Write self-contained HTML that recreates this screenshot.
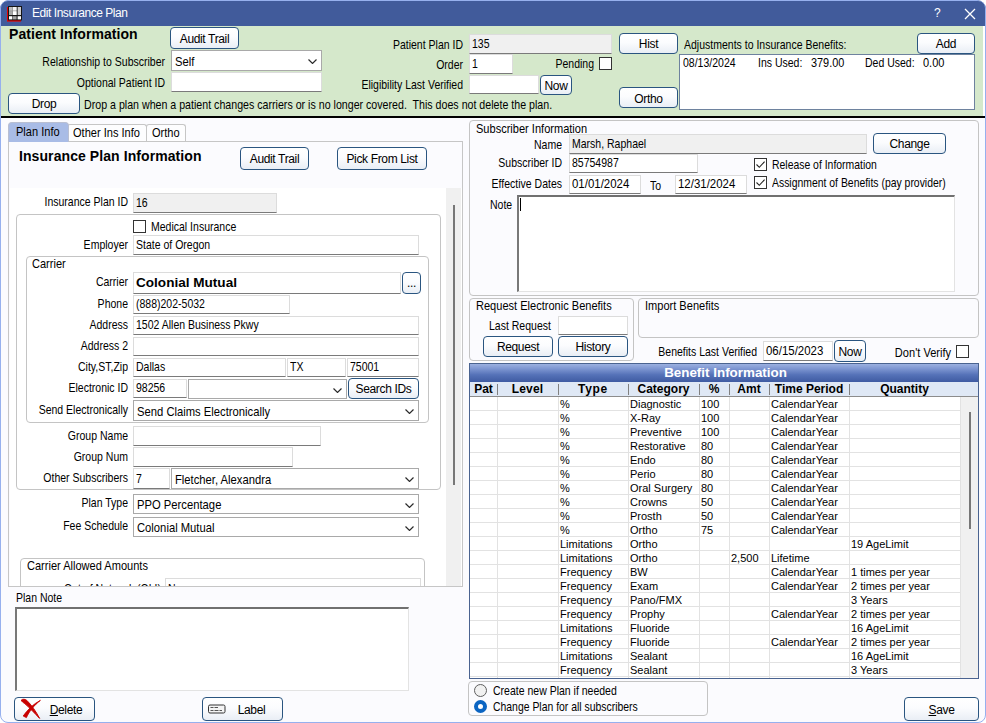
<!DOCTYPE html>
<html>
<head>
<meta charset="utf-8">
<title>Edit Insurance Plan</title>
<style>
*{box-sizing:border-box;margin:0;padding:0}
html,body{width:986px;height:723px;overflow:hidden;background:#fff}
body{font-family:"Liberation Sans",sans-serif;font-size:11px;color:#000;position:relative}
#win{position:absolute;left:0;top:0;width:986px;height:723px;background:#fff;border-top-left-radius:9px;border-top-right-radius:9px;overflow:hidden}
.a{position:absolute;white-space:pre}
.l{position:absolute;white-space:pre;text-align:right;height:16px;line-height:16px;transform:scale(.955,1.08);transform-origin:100% 74%}
.t{position:absolute;white-space:pre;height:16px;line-height:16px;transform:scale(.955,1.08);transform-origin:0 74%}
.x{display:inline-block;line-height:1;transform:scale(.955,1.08);transform-origin:0 85%}
.s .x{font-size:12px;transform:scale(.937,1.05)}
.x.d{transform:scale(1.04,1.08)}
.i{position:absolute;background:#fff;border:1px solid #dcdcdc;border-bottom-color:#7a7a7a;white-space:pre;padding-left:2px;line-height:16px;overflow:hidden}
.g{background:#f0f0f0}
.s{position:absolute;background:#fff;border:1px solid #a9a9a9;white-space:pre;padding-left:3px;line-height:23px;overflow:hidden}
.s svg{position:absolute;right:4px;top:8px}
.b{position:absolute;border:1px solid #2a5580;border-radius:4px;background:linear-gradient(#ffffff 0%,#fbfcfe 45%,#e9eef5 100%);text-align:center;white-space:pre;font-size:12px;letter-spacing:-0.35px;padding-top:1px}
.c{position:absolute;width:13px;height:13px;border:1px solid #333;background:#fff}
.gt{transform:scale(1.004,1.08)}
.gb{position:absolute;border:1px solid #c4c4c4;border-radius:4px}
.gh{height:15px;line-height:15px;text-align:center;font-weight:bold;font-size:12px;letter-spacing:0}
.gr{left:0;width:491px;height:14px;border-bottom:1px solid #e2e2e2}
.gr span{position:absolute;top:0;line-height:14px;white-space:pre;font-size:11px}
</style>
</head>
<body>
<div id="win">
<!-- title bar -->
<div class="a" id="tb" style="left:0;top:0;width:986px;height:26px;background:#415b9b"></div>
<div class="a" style="left:32px;top:5px;color:#fff;font-size:12px;letter-spacing:-0.45px;line-height:16px">Edit Insurance Plan</div>
<div class="a" style="left:934px;top:6px;color:#fff;font-size:12px;line-height:15px">?</div>
<svg class="a" style="left:964px;top:8px" width="12" height="12" viewBox="0 0 12 12"><path d="M1 1L11 11M11 1L1 11" stroke="#fff" stroke-width="1.3" fill="none"/></svg>
<!-- app icon -->
<svg class="a" style="left:7px;top:6px" width="15" height="16" viewBox="0 0 15 16"><rect x="0" y="1" width="14" height="14.6" fill="#e60000"/><rect x="1" y="0" width="14" height="14.4" fill="#151515"/><rect x="2" y="1" width="7.6" height="8" fill="#8a8a8a"/><rect x="2" y="1" width="3.4" height="3.6" fill="#bdbdbd"/><rect x="6" y="1" width="3.6" height="3.6" fill="#f4f4f4"/><rect x="10.6" y="1" width="3.4" height="8" fill="#cfcfcf"/><rect x="2" y="5.2" width="3.4" height="3.8" fill="#a9a9a9"/><rect x="6" y="5.2" width="3.6" height="3.8" fill="#fff"/><rect x="2" y="10.2" width="3.4" height="3.2" fill="#fff"/><rect x="6" y="10.2" width="3.6" height="3.2" fill="#a2a2a2"/><rect x="10.6" y="10.2" width="3.4" height="3.2" fill="#fff"/></svg>

<!-- green patient panel -->
<div class="a" id="green" style="left:0;top:26px;width:983px;height:90px;background:#d5e8cb"></div>
<div class="a" style="left:0;top:116px;width:986px;height:2px;background:#000"></div>
<div class="a" style="left:9px;top:26px;font-weight:bold;font-size:14px;letter-spacing:0.06px;line-height:17px">Patient Information</div>
<div class="b" style="left:170px;top:27px;width:69px;height:22px;line-height:20px">Audit Trail</div>
<div class="l" style="left:0;width:165px;top:54px">Relationship to Subscriber</div>
<div class="s" style="left:171px;top:50px;width:151px;height:21px"><span class="x">Self</span><svg width="9" height="5" viewBox="0 0 9 5"><path d="M0.5 0.5L4.5 4.5L8.5 0.5" stroke="#2a2a2a" stroke-width="1.15" fill="none"/></svg></div>
<div class="l" style="left:0;width:165px;top:75px">Optional Patient ID</div>
<div class="i" style="left:171px;top:72px;width:151px;height:20px;line-height:18px"></div>
<div class="b" style="left:8px;top:93px;width:72px;height:21px;line-height:19px">Drop</div>
<div class="t" style="left:84px;top:97px;transform:scale(.967,1.08)">Drop a plan when a patient changes carriers or is no longer covered.  This does not delete the plan.</div>

<div class="l" style="left:300px;width:163px;top:37px">Patient Plan ID</div>
<div class="i g" style="left:469px;top:34px;width:143px;height:20px;line-height:18px"><span class="x">135</span></div>
<div class="l" style="left:300px;width:163px;top:57px">Order</div>
<div class="i" style="left:469px;top:54px;width:44px;height:20px;line-height:18px"><span class="x">1</span></div>
<div class="l" style="left:500px;width:94px;top:56px">Pending</div>
<div class="c" style="left:599px;top:57px"></div>
<div class="l" style="left:300px;width:163px;top:77px">Eligibility Last Verified</div>
<div class="i" style="left:469px;top:75px;width:70px;height:19px"></div>
<div class="b" style="left:540px;top:75px;width:32px;height:20px;line-height:18px">Now</div>
<div class="b" style="left:619px;top:33px;width:59px;height:21px;line-height:19px">Hist</div>
<div class="b" style="left:619px;top:87px;width:59px;height:21px;line-height:20px">Ortho</div>
<div class="t" style="left:684px;top:37px">Adjustments to Insurance Benefits:</div>
<div class="b" style="left:917px;top:33px;width:58px;height:21px;line-height:19px">Add</div>
<div class="a" style="left:679px;top:54px;width:296px;height:56px;background:#fff;border:1px solid #6e829e"></div>
<div class="t" style="left:683px;top:55px">08/13/2024</div>
<div class="t" style="left:758px;top:55px">Ins Used:</div>
<div class="t" style="left:811px;top:55px;transform:scale(.99,1.08)">379.00</div>
<div class="t" style="left:865px;top:55px">Ded Used:</div>
<div class="t" style="left:923px;top:55px;transform:scale(1,1.08)">0.00</div>

<!-- SECTION:LEFT -->
<!-- main bg -->
<div class="a" style="left:0;top:118px;width:986px;height:605px;background:#fbfbfe"></div>
<!-- tabs -->
<div class="a" style="left:67px;top:124px;width:80px;height:18px;border:1px solid #c6c6c6;border-bottom:none;border-radius:3px 3px 0 0;background:#fdfdfe"></div>
<div class="a" style="left:146px;top:124px;width:40px;height:18px;border:1px solid #c6c6c6;border-bottom:none;border-radius:3px 3px 0 0;background:#fdfdfe"></div>
<div class="a" style="left:8px;top:141px;width:455px;height:446px;border:1px solid #c6c6c6;background:#fbfbfe"></div>
<div class="a" style="left:8px;top:122px;width:61px;height:20px;border-radius:4px 4px 0 0;background:#a9bce6;border:1px solid #b9bfd2;border-bottom:none"></div>
<div class="t gt" style="left:16px;top:124px">Plan Info</div>
<div class="t gt" style="left:73px;top:125px">Other Ins Info</div>
<div class="t gt" style="left:152px;top:125px">Ortho</div>
<div class="a" style="left:19px;top:148px;font-weight:bold;font-size:14px;letter-spacing:0.08px;line-height:17px">Insurance Plan Information</div>
<div class="b" style="left:240px;top:147px;width:69px;height:23px;line-height:21px">Audit Trail</div>
<div class="b" style="left:337px;top:147px;width:90px;height:23px;line-height:21px">Pick From List</div>
<!-- scroll panel -->
<div class="a" id="sp" style="left:10px;top:188px;width:452px;height:398px;background:#fff;overflow:hidden">
 <div class="a" style="left:436px;top:0;width:15px;height:400px;background:#f0f0f0"></div>
 <div class="a" style="left:443px;top:17px;width:2px;height:280px;background:#777"></div>
 <div class="l" style="left:0;width:118px;top:6px">Insurance Plan ID</div>
 <div class="i g" style="left:123px;top:5px;width:144px;height:20px;line-height:18px"><span class="x">16</span></div>
 <div class="gb" style="left:6px;top:26px;width:425px;height:276px"></div>
 <div class="c" style="left:123px;top:32px"></div>
 <div class="t" style="left:141px;top:31px">Medical Insurance</div>
 <div class="l" style="left:0;width:118px;top:49px">Employer</div>
 <div class="i" style="left:123px;top:47px;width:286px;height:20px;line-height:18px"><span class="x">State of Oregon</span></div>
 <div class="gb" style="left:16px;top:68px;width:403px;height:167px"></div>
 <div class="t gt" style="left:22px;top:68px">Carrier</div>
 <div class="l" style="left:0;width:118px;top:86px">Carrier</div>
 <div class="i cm" style="left:123px;top:84px;width:268px;height:22px;font-weight:bold;font-size:12.5px;line-height:21px"><span style="display:inline-block;transform:scale(1.085,1);transform-origin:0 50%">Colonial Mutual</span></div>
 <div class="b" style="left:392px;top:84px;width:19px;height:22px;line-height:19px">...</div>
 <div class="l" style="left:0;width:118px;top:108px">Phone</div>
 <div class="i" style="left:123px;top:107px;width:157px;height:19px"><span class="x">(888)202-5032</span></div>
 <div class="l" style="left:0;width:118px;top:129px">Address</div>
 <div class="i" style="left:123px;top:128px;width:286px;height:19px"><span class="x">1502 Allen Business Pkwy</span></div>
 <div class="l" style="left:0;width:118px;top:150px">Address 2</div>
 <div class="i" style="left:123px;top:149px;width:286px;height:19px"></div>
 <div class="l" style="left:0;width:118px;top:171px">City,ST,Zip</div>
 <div class="i" style="left:123px;top:170px;width:153px;height:19px"><span class="x">Dallas</span></div>
 <div class="i" style="left:277px;top:170px;width:59px;height:19px"><span class="x">TX</span></div>
 <div class="i" style="left:337px;top:170px;width:72px;height:19px"><span class="x">75001</span></div>
 <div class="l" style="left:0;width:118px;top:192px">Electronic ID</div>
 <div class="i" style="left:123px;top:191px;width:54px;height:19px"><span class="x">98256</span></div>
 <div class="s" style="left:178px;top:191px;width:159px;height:20px"><svg width="9" height="5" viewBox="0 0 9 5"><path d="M0.5 0.5L4.5 4.5L8.5 0.5" stroke="#2a2a2a" stroke-width="1.15" fill="none"/></svg></div>
 <div class="b" style="left:338px;top:190px;width:71px;height:21px;line-height:19px">Search IDs</div>
 <div class="l" style="left:0;width:118px;top:214px">Send Electronically</div>
 <div class="s" style="left:123px;top:212px;width:286px;height:21px"><span class="x">Send Claims Electronically</span><svg width="9" height="5" viewBox="0 0 9 5"><path d="M0.5 0.5L4.5 4.5L8.5 0.5" stroke="#2a2a2a" stroke-width="1.15" fill="none"/></svg></div>
 <div class="l" style="left:0;width:118px;top:240px">Group Name</div>
 <div class="i" style="left:123px;top:238px;width:188px;height:20px;line-height:18px"></div>
 <div class="l" style="left:0;width:118px;top:261px">Group Num</div>
 <div class="i" style="left:123px;top:259px;width:160px;height:20px;line-height:18px"></div>
 <div class="l" style="left:0;width:118px;top:282px">Other Subscribers</div>
 <div class="i" style="left:123px;top:280px;width:37px;height:21px;line-height:20px"><span class="x">7</span></div>
 <div class="s" style="left:161px;top:280px;width:248px;height:21px"><span class="x">Fletcher, Alexandra</span><svg width="9" height="5" viewBox="0 0 9 5"><path d="M0.5 0.5L4.5 4.5L8.5 0.5" stroke="#2a2a2a" stroke-width="1.15" fill="none"/></svg></div>
 <div class="l" style="left:0;width:118px;top:307px">Plan Type</div>
 <div class="s" style="left:123px;top:306px;width:286px;height:20px;line-height:21px"><span class="x">PPO Percentage</span><svg width="9" height="5" viewBox="0 0 9 5"><path d="M0.5 0.5L4.5 4.5L8.5 0.5" stroke="#2a2a2a" stroke-width="1.15" fill="none"/></svg></div>
 <div class="l" style="left:0;width:118px;top:330px">Fee Schedule</div>
 <div class="s" style="left:123px;top:329px;width:286px;height:20px;line-height:21px"><span class="x">Colonial Mutual</span><svg width="9" height="5" viewBox="0 0 9 5"><path d="M0.5 0.5L4.5 4.5L8.5 0.5" stroke="#2a2a2a" stroke-width="1.15" fill="none"/></svg></div>
 <div class="gb" style="left:10px;top:370px;width:405px;height:60px"></div>
 <div class="t gt" style="left:17px;top:370px">Carrier Allowed Amounts</div>
 <div class="l" style="left:0;width:151px;top:393px">Out of Network (OLI)</div>
 <div class="i" style="left:155px;top:390px;width:256px;height:20px;line-height:21px"><span class="x">None</span></div>
</div>
<!-- plan note -->
<div class="t" style="left:16px;top:590px">Plan Note</div>
<div class="a" style="left:15px;top:607px;width:394px;height:84px;background:#fff;border:1px solid #e3e3e3;border-top:2px solid #707070;border-left:2px solid #787878"></div>
<div class="b" style="left:14px;top:697px;width:81px;height:24px;line-height:22px;padding-left:23px"><u>D</u>elete</div>
<svg class="a" style="left:20px;top:698px" width="22" height="22" viewBox="0 0 22 22"><path d="M1.4 2C2.6 0.9 5.2 1 6.8 2.4C11.5 7 16 13.5 19.6 20.4C14.5 15 9 9.2 4.8 5.6C3.4 4.6 1.6 3.8 1.4 2Z" fill="#c80000" stroke="#c80000" stroke-width="1" stroke-linejoin="round"/><path d="M20.4 2.4C14.5 6.8 9 13.5 6.4 19.6L3.2 18C7.4 12 13.5 5.8 20.4 2.4Z" fill="#c80000" stroke="#c80000" stroke-width="0.9" stroke-linejoin="round"/></svg>
<div class="b" style="left:202px;top:697px;width:81px;height:24px;line-height:22px;padding-left:18px">Label</div>
<svg class="a" style="left:208px;top:704px" width="18" height="10" viewBox="0 0 18 10"><rect x="0.5" y="1" width="16.5" height="8" rx="1.5" fill="#f4f4f4" stroke="#333"/><path d="M2.5 3.5h3M6.5 3.5h3.5M2.5 6.5h3M6.5 6.5h4M11.5 6.5h2.5" stroke="#555" stroke-width="1"/></svg>
<!-- END:LEFT -->
<!-- SECTION:RIGHT -->
<div class="gb" style="left:469px;top:120px;width:510px;height:176px"></div>
<div class="t gt" style="left:476px;top:121px">Subscriber Information</div>
<div class="l" style="left:470px;width:92px;top:137px">Name</div>
<div class="i g" style="left:569px;top:134px;width:298px;height:20px;line-height:18px"><span class="x">Marsh, Raphael</span></div>
<div class="b" style="left:873px;top:133px;width:73px;height:21px;line-height:19px">Change</div>
<div class="l" style="left:470px;width:92px;top:155px">Subscriber ID</div>
<div class="i" style="left:569px;top:154px;width:129px;height:19px"><span class="x">85754987</span></div>
<div class="c" style="left:754px;top:158px"><svg width="11" height="11" viewBox="0 0 11 11" style="position:absolute;left:0;top:0"><path d="M1.5 5.5L4.3 8.3L9.6 2.6" stroke="#222" stroke-width="1.1" fill="none"/></svg></div>
<div class="t" style="left:772px;top:157px;transform:scale(.947,1.08)">Release of Information</div>
<div class="l" style="left:470px;width:92px;top:176px">Effective Dates</div>
<div class="i" style="left:569px;top:175px;width:72px;height:19px"><span class="x d">01/01/2024</span></div>
<div class="t" style="left:650px;top:178px">To</div>
<div class="i" style="left:675px;top:175px;width:72px;height:19px"><span class="x d">12/31/2024</span></div>
<div class="c" style="left:754px;top:176px"><svg width="11" height="11" viewBox="0 0 11 11" style="position:absolute;left:0;top:0"><path d="M1.5 5.5L4.3 8.3L9.6 2.6" stroke="#222" stroke-width="1.1" fill="none"/></svg></div>
<div class="t" style="left:772px;top:175px;transform:scale(.947,1.08)">Assignment of Benefits (pay provider)</div>
<div class="t" style="left:490px;top:197px">Note</div>
<div class="a" style="left:517px;top:195px;width:438px;height:97px;background:#fff;border:1px solid #e3e3e3;border-top:2px solid #707070;border-left:2px solid #787878"></div>
<div class="a" style="left:520px;top:198px;width:1px;height:13px;background:#000"></div>
<div class="gb" style="left:469px;top:298px;width:165px;height:63px"></div>
<div class="t gt" style="left:476px;top:298px">Request Electronic Benefits</div>
<div class="t" style="left:489px;top:318px">Last Request</div>
<div class="i" style="left:558px;top:316px;width:70px;height:19px"></div>
<div class="b" style="left:483px;top:336px;width:70px;height:21px;line-height:19px">Request</div>
<div class="b" style="left:558px;top:336px;width:70px;height:21px;line-height:19px">History</div>
<div class="gb" style="left:638px;top:298px;width:341px;height:40px"></div>
<div class="t gt" style="left:645px;top:298px">Import Benefits</div>
<div class="l" style="left:600px;width:157px;top:344px">Benefits Last Verified</div>
<div class="i" style="left:763px;top:341px;width:70px;height:20px;line-height:19px"><span class="x d">06/15/2023</span></div>
<div class="b" style="left:834px;top:340px;width:32px;height:22px;line-height:20px">Now</div>
<div class="l gt" style="left:860px;width:91px;top:345px">Don't Verify</div>
<div class="c" style="left:956px;top:345px"></div>
<div class="a" id="grid" style="left:469px;top:363px;width:510px;height:316px;background:#fff;border:1px solid #4a6390;overflow:hidden;letter-spacing:0">
 <div class="a" style="left:0;top:0;width:508px;height:18px;background:linear-gradient(#9cb0e0 0%,#7f97d2 25%,#5572b8 60%,#3f5ba2 100%);color:#fff;font-weight:bold;font-size:13.4px;text-align:center;line-height:18px;padding-left:3px">Benefit Information</div>
 <div class="a" style="left:0;top:18px;width:508px;height:15px;background:#dfe8f5;border-bottom:1px solid #8c8c8c"></div>
 <div class="a gh" style="left:0px;top:18px;width:27px">Pat</div>
 <div class="a gh" style="left:27px;top:18px;width:61px;letter-spacing:0.2px">Level</div>
 <div class="a gh" style="left:88px;top:18px;width:70px;letter-spacing:0.7px">Type</div>
 <div class="a gh" style="left:158px;top:18px;width:71px">Category</div>
 <div class="a gh" style="left:229px;top:18px;width:30px">%</div>
 <div class="a gh" style="left:259px;top:18px;width:40px">Amt</div>
 <div class="a gh" style="left:299px;top:18px;width:80px">Time Period</div>
 <div class="a gh" style="left:379px;top:18px;width:111px">Quantity</div>
 <div class="a" style="left:27px;top:20px;width:1px;height:11px;background:#808080"></div>
 <div class="a" style="left:88px;top:20px;width:1px;height:11px;background:#808080"></div>
 <div class="a" style="left:158px;top:20px;width:1px;height:11px;background:#808080"></div>
 <div class="a" style="left:229px;top:20px;width:1px;height:11px;background:#808080"></div>
 <div class="a" style="left:259px;top:20px;width:1px;height:11px;background:#808080"></div>
 <div class="a" style="left:299px;top:20px;width:1px;height:11px;background:#808080"></div>
 <div class="a" style="left:379px;top:20px;width:1px;height:11px;background:#808080"></div>
 <div class="a" style="left:27px;top:33px;width:1px;height:281px;background:#e2e2e2"></div>
 <div class="a" style="left:88px;top:33px;width:1px;height:281px;background:#e2e2e2"></div>
 <div class="a" style="left:158px;top:33px;width:1px;height:281px;background:#e2e2e2"></div>
 <div class="a" style="left:229px;top:33px;width:1px;height:281px;background:#e2e2e2"></div>
 <div class="a" style="left:259px;top:33px;width:1px;height:281px;background:#e2e2e2"></div>
 <div class="a" style="left:299px;top:33px;width:1px;height:281px;background:#e2e2e2"></div>
 <div class="a" style="left:379px;top:33px;width:1px;height:281px;background:#e2e2e2"></div>
 <div class="a" style="left:490px;top:33px;width:1px;height:281px;background:#e2e2e2"></div>
 <div class="a" style="left:491px;top:33px;width:17px;height:282px;background:#f0f0f0"></div>
 <div class="a" style="left:499px;top:48px;width:2px;height:117px;background:#777"></div>
 <div class="a gr" style="top:33px">
<span style="left:90px">%</span>
<span style="left:160px">Diagnostic</span>
<span style="left:231px">100</span>
<span style="left:301px">CalendarYear</span>
</div>
 <div class="a gr" style="top:47px">
<span style="left:90px">%</span>
<span style="left:160px">X-Ray</span>
<span style="left:231px">100</span>
<span style="left:301px">CalendarYear</span>
</div>
 <div class="a gr" style="top:61px">
<span style="left:90px">%</span>
<span style="left:160px">Preventive</span>
<span style="left:231px">100</span>
<span style="left:301px">CalendarYear</span>
</div>
 <div class="a gr" style="top:75px">
<span style="left:90px">%</span>
<span style="left:160px">Restorative</span>
<span style="left:231px">80</span>
<span style="left:301px">CalendarYear</span>
</div>
 <div class="a gr" style="top:89px">
<span style="left:90px">%</span>
<span style="left:160px">Endo</span>
<span style="left:231px">80</span>
<span style="left:301px">CalendarYear</span>
</div>
 <div class="a gr" style="top:103px">
<span style="left:90px">%</span>
<span style="left:160px">Perio</span>
<span style="left:231px">80</span>
<span style="left:301px">CalendarYear</span>
</div>
 <div class="a gr" style="top:117px">
<span style="left:90px">%</span>
<span style="left:160px">Oral Surgery</span>
<span style="left:231px">80</span>
<span style="left:301px">CalendarYear</span>
</div>
 <div class="a gr" style="top:131px">
<span style="left:90px">%</span>
<span style="left:160px">Crowns</span>
<span style="left:231px">50</span>
<span style="left:301px">CalendarYear</span>
</div>
 <div class="a gr" style="top:145px">
<span style="left:90px">%</span>
<span style="left:160px">Prosth</span>
<span style="left:231px">50</span>
<span style="left:301px">CalendarYear</span>
</div>
 <div class="a gr" style="top:159px">
<span style="left:90px">%</span>
<span style="left:160px">Ortho</span>
<span style="left:231px">75</span>
<span style="left:301px">CalendarYear</span>
</div>
 <div class="a gr" style="top:173px">
<span style="left:90px">Limitations</span>
<span style="left:160px">Ortho</span>
<span style="left:381px">19 AgeLimit</span>
</div>
 <div class="a gr" style="top:187px">
<span style="left:90px">Limitations</span>
<span style="left:160px">Ortho</span>
<span style="left:261px">2,500</span>
<span style="left:301px">Lifetime</span>
</div>
 <div class="a gr" style="top:201px">
<span style="left:90px">Frequency</span>
<span style="left:160px">BW</span>
<span style="left:301px">CalendarYear</span>
<span style="left:381px">1 times per year</span>
</div>
 <div class="a gr" style="top:215px">
<span style="left:90px">Frequency</span>
<span style="left:160px">Exam</span>
<span style="left:301px">CalendarYear</span>
<span style="left:381px">2 times per year</span>
</div>
 <div class="a gr" style="top:229px">
<span style="left:90px">Frequency</span>
<span style="left:160px">Pano/FMX</span>
<span style="left:381px">3 Years</span>
</div>
 <div class="a gr" style="top:243px">
<span style="left:90px">Frequency</span>
<span style="left:160px">Prophy</span>
<span style="left:301px">CalendarYear</span>
<span style="left:381px">2 times per year</span>
</div>
 <div class="a gr" style="top:257px">
<span style="left:90px">Limitations</span>
<span style="left:160px">Fluoride</span>
<span style="left:381px">16 AgeLimit</span>
</div>
 <div class="a gr" style="top:271px">
<span style="left:90px">Frequency</span>
<span style="left:160px">Fluoride</span>
<span style="left:301px">CalendarYear</span>
<span style="left:381px">2 times per year</span>
</div>
 <div class="a gr" style="top:285px">
<span style="left:90px">Limitations</span>
<span style="left:160px">Sealant</span>
<span style="left:381px">16 AgeLimit</span>
</div>
 <div class="a gr" style="top:299px">
<span style="left:90px">Frequency</span>
<span style="left:160px">Sealant</span>
<span style="left:381px">3 Years</span>
</div>
</div>
<div class="gb" style="left:468px;top:681px;width:240px;height:35px"></div>
<div class="a" style="left:474px;top:684px;width:13px;height:13px;border:1px solid #5f5f5f;border-radius:50%;background:#f1f1f1"></div>
<div class="t" style="left:493px;top:683px">Create new Plan if needed</div>
<div class="a" style="left:474px;top:700px;width:13px;height:13px;border:4px solid #0a64c2;border-radius:50%;background:#fff"></div>
<div class="t" style="left:493px;top:699px;transform:scale(.947,1.08)">Change Plan for all subscribers</div>
<div class="b" style="left:904px;top:697px;width:75px;height:24px;line-height:22px"><u>S</u>ave</div>
<!-- END:RIGHT -->
<div class="a" id="frame" style="left:0;top:0;width:986px;height:723px;border:1px solid #96b0ee;border-radius:8px;box-shadow:0 0 0 12px #fff;pointer-events:none"></div>
</div>
</body>
</html>
